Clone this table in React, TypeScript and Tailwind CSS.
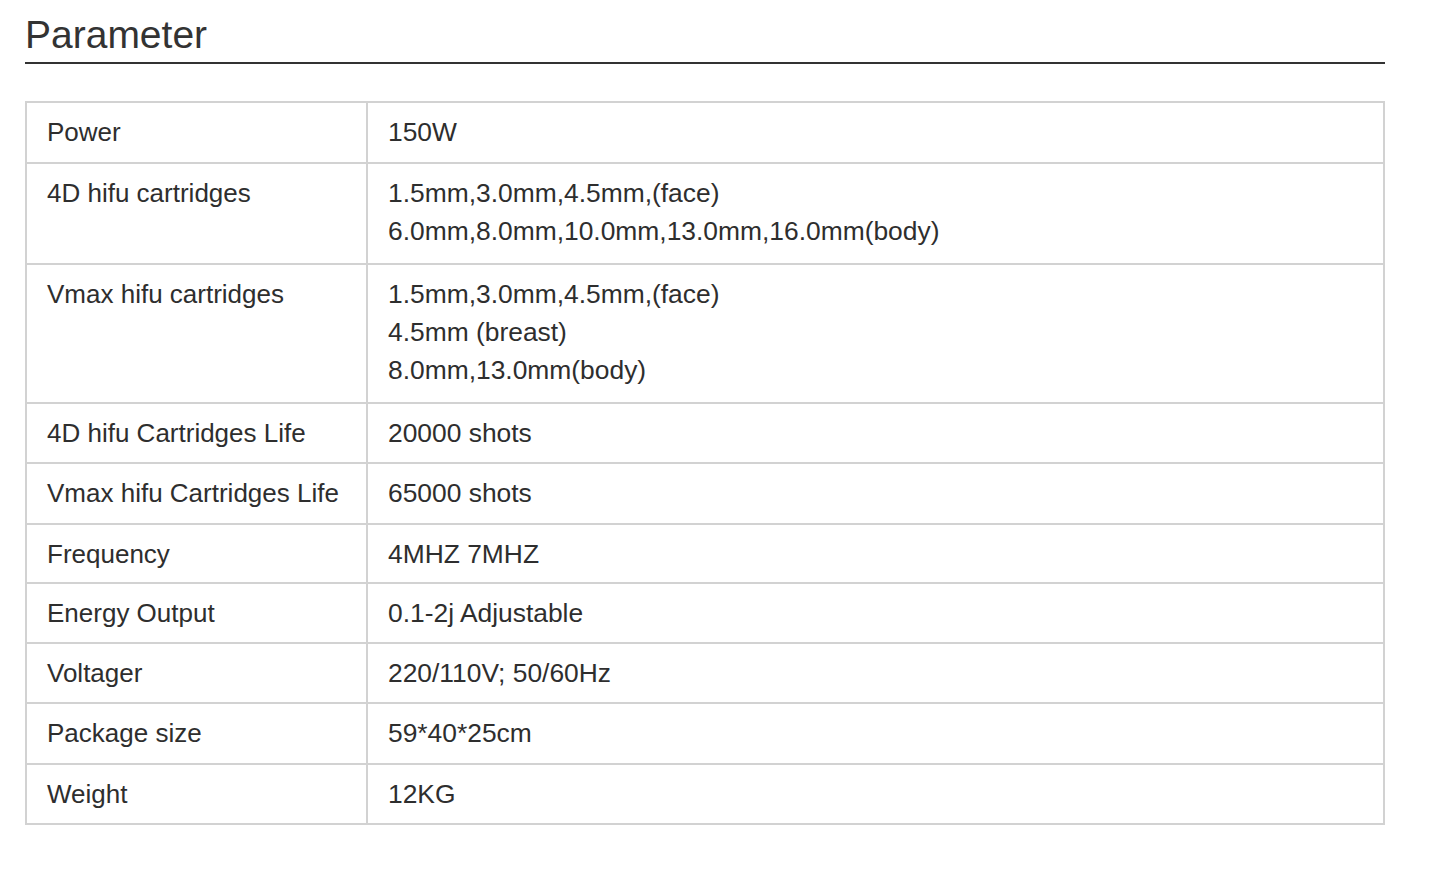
import React from "react";

const rows: { k: string; v: string[]; h: number }[] = [
  { k: "Power", v: ["150W"], h: 61 },
  {
    k: "4D hifu cartridges",
    v: ["1.5mm,3.0mm,4.5mm,(face)", "6.0mm,8.0mm,10.0mm,13.0mm,16.0mm(body)"],
    h: 101,
  },
  {
    k: "Vmax hifu cartridges",
    v: ["1.5mm,3.0mm,4.5mm,(face)", "4.5mm (breast)", "8.0mm,13.0mm(body)"],
    h: 139,
  },
  { k: "4D hifu Cartridges Life", v: ["20000 shots"], h: 60 },
  { k: "Vmax hifu Cartridges Life", v: ["65000 shots"], h: 61 },
  { k: "Frequency", v: ["4MHZ 7MHZ"], h: 59 },
  { k: "Energy Output", v: ["0.1-2j Adjustable"], h: 60 },
  { k: "Voltager", v: ["220/110V; 50/60Hz"], h: 60 },
  { k: "Package size", v: ["59*40*25cm"], h: 61 },
  { k: "Weight", v: ["12KG"], h: 58 },
];

export default function App() {
  return (
    <div
      className="w-[1440px] h-[871px] bg-white text-[#2e2e2e] overflow-hidden"
      style={{ fontFamily: '"Liberation Sans", Arial, sans-serif' }}
    >
      <div className="ml-[25px] w-[1360px]">
        <h1 className="mt-[15px] text-[39px] leading-none font-normal text-[#333]">Parameter</h1>
        <div className="mt-[8px] h-[2px] bg-[#333]" />
        <div className="mt-[37px] border-2 border-[#d2d2d2]">
          {rows.map((r, i) => (
            <div
              key={r.k}
              className={`flex ${i < rows.length - 1 ? "border-b-2 border-[#d2d2d2]" : ""}`}
              style={{ height: r.h }}
            >
              <div className="w-[341px] shrink-0 border-r-2 border-[#d2d2d2] pl-[20px] pt-[10px] text-[26px] leading-[38px]">
                {r.k}
              </div>
              <div className="pl-[20px] pt-[10px] text-[26.4px] leading-[38px]">
                {r.v.map((line) => (
                  <div key={line}>{line}</div>
                ))}
              </div>
            </div>
          ))}
        </div>
      </div>
    </div>
  );
}
